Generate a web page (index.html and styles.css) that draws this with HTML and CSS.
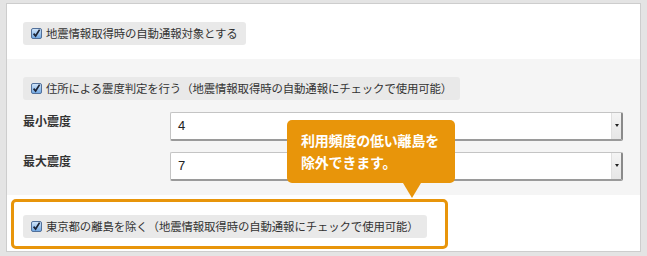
FILE: index.html
```html
<!DOCTYPE html>
<html lang="ja">
<head>
<meta charset="utf-8">
<link rel="stylesheet" href="styles.css">
</head>
<body>
<div class="frame">
  <div class="panel">
    <section class="sec sec-top">
      <label class="chk">
        <svg class="box" width="11" height="11" viewBox="0 0 11 11"><defs><linearGradient id="g1" x1="0" y1="0" x2="0" y2="1"><stop offset="0" stop-color="#d4e7fa"/><stop offset="1" stop-color="#6ea6e2"/></linearGradient></defs><rect x="0.5" y="0.5" width="10" height="10" rx="1.5" fill="url(#g1)" stroke="#52709a"/><path d="M2.6 5.6 L4.6 8 L8.6 1.6" fill="none" stroke="#1c2334" stroke-width="1.7"/></svg>
        <span>地震情報取得時の自動通報対象とする</span>
      </label>
    </section>
    <section class="sec sec-mid">
      <label class="chk">
        <svg class="box" width="11" height="11" viewBox="0 0 11 11"><defs><linearGradient id="g2" x1="0" y1="0" x2="0" y2="1"><stop offset="0" stop-color="#d4e7fa"/><stop offset="1" stop-color="#6ea6e2"/></linearGradient></defs><rect x="0.5" y="0.5" width="10" height="10" rx="1.5" fill="url(#g2)" stroke="#52709a"/><path d="M2.6 5.6 L4.6 8 L8.6 1.6" fill="none" stroke="#1c2334" stroke-width="1.7"/></svg>
        <span>住所による震度判定を行う（地震情報取得時の自動通報にチェックで使用可能）</span>
      </label>
      <div class="rows">
        <div class="row">
          <div class="lbl">最小震度</div>
          <div class="sel"><span class="val">4</span><span class="btn"><i class="tri"></i></span></div>
        </div>
        <div class="row">
          <div class="lbl">最大震度</div>
          <div class="sel"><span class="val">7</span><span class="btn"><i class="tri"></i></span></div>
        </div>
      </div>
    </section>
    <section class="sec sec-bot">
      <div class="hl">
        <label class="chk">
          <svg class="box" width="11" height="11" viewBox="0 0 11 11"><defs><linearGradient id="g3" x1="0" y1="0" x2="0" y2="1"><stop offset="0" stop-color="#d4e7fa"/><stop offset="1" stop-color="#6ea6e2"/></linearGradient></defs><rect x="0.5" y="0.5" width="10" height="10" rx="1.5" fill="url(#g3)" stroke="#52709a"/><path d="M2.6 5.6 L4.6 8 L8.6 1.6" fill="none" stroke="#1c2334" stroke-width="1.7"/></svg>
          <span>東京都の離島を除く（地震情報取得時の自動通報にチェックで使用可能）</span>
        </label>
      </div>
    </section>
  </div>
  <div class="tip">利用頻度の低い離島を<br>除外できます。</div>
</div>
</body>
</html>
```
FILE: styles.css
```css
* { box-sizing: border-box; }
html, body { margin: 0; padding: 0; }
body {
  width: 647px;
  height: 256px;
  overflow: hidden;
  font-family: "Noto Sans CJK JP", "Noto Sans", sans-serif;
  color: #333;
}
.frame {
  position: relative;
  width: 647px;
  height: 256px;
  background: #e4e4e4;
  padding: 3px 6px 4px 6px;
}
.panel {
  height: 249px;
  background: #fff;
  border: 1px solid #cdcdcd;
  display: flex;
  flex-direction: column;
}
.sec { padding-left: 16px; }
.sec-top { height: 55px; padding-top: 16px; }
.sec-mid {
  height: 136px;
  background: #f5f5f5;
  padding-top: 16px;
  padding-right: 17px;
}
.sec-bot { padding: 4px 0 0 4px; }
.chk {
  display: inline-flex;
  align-items: center;
  height: 23px;
  padding: 0 8px 0 8px;
  background: #e9e9e9;
  border-radius: 3px;
  font-size: 11.4px;
  line-height: 23px;
  color: #333;
  letter-spacing: -0.1px;
}
.chk .box { flex: none; margin-right: 4px; margin-top: 1px; }
.rows {
  margin-top: 12px;
  display: flex;
  flex-direction: column;
  gap: 11px;
}
.row {
  display: grid;
  grid-template-columns: 147px 1fr;
  align-items: center;
}
.lbl {
  font-weight: bold;
  font-size: 12px;
  color: #333;
  margin-top: -12px;
}
.sel {
  height: 29px;
  background: #fff;
  border: 1px solid #c4c4c4;
  border-right: 2px solid #8a8a8a;
  border-bottom: 2px solid #9a9a9a;
  border-radius: 2px;
  display: flex;
  align-items: center;
  justify-content: space-between;
}
.val {
  font-family: "Liberation Sans", Arial, sans-serif;
  font-size: 13px;
  padding-left: 7px;
  color: #222;
}
.btn {
  width: 10px;
  height: 100%;
  background: linear-gradient(#f4f4f4, #e6e6e6);
  border-left: 1px solid #e0e0e0;
  display: flex;
  align-items: center;
  justify-content: center;
}
.tri {
  width: 0; height: 0;
  border-left: 2.5px solid transparent;
  border-right: 2.5px solid transparent;
  border-top: 3px solid #222;
}
.hl {
  width: 437px;
  height: 50px;
  border: 3px solid #e8950a;
  border-radius: 5px;
  padding: 11px 0 0 9px;
}
.tip {
  position: absolute;
  left: 287px;
  top: 120px;
  width: 168px;
  height: 63px;
  background: #e8950a;
  border-radius: 5px;
  color: #fff;
  font-weight: bold;
  font-size: 14px;
  line-height: 22px;
  padding: 9px 0 0 14px;
  letter-spacing: -0.2px;
}
.tip::after {
  content: "";
  position: absolute;
  left: 116px;
  top: 63px;
  border-left: 9px solid transparent;
  border-right: 9px solid transparent;
  border-top: 15px solid #e8950a;
}
```
